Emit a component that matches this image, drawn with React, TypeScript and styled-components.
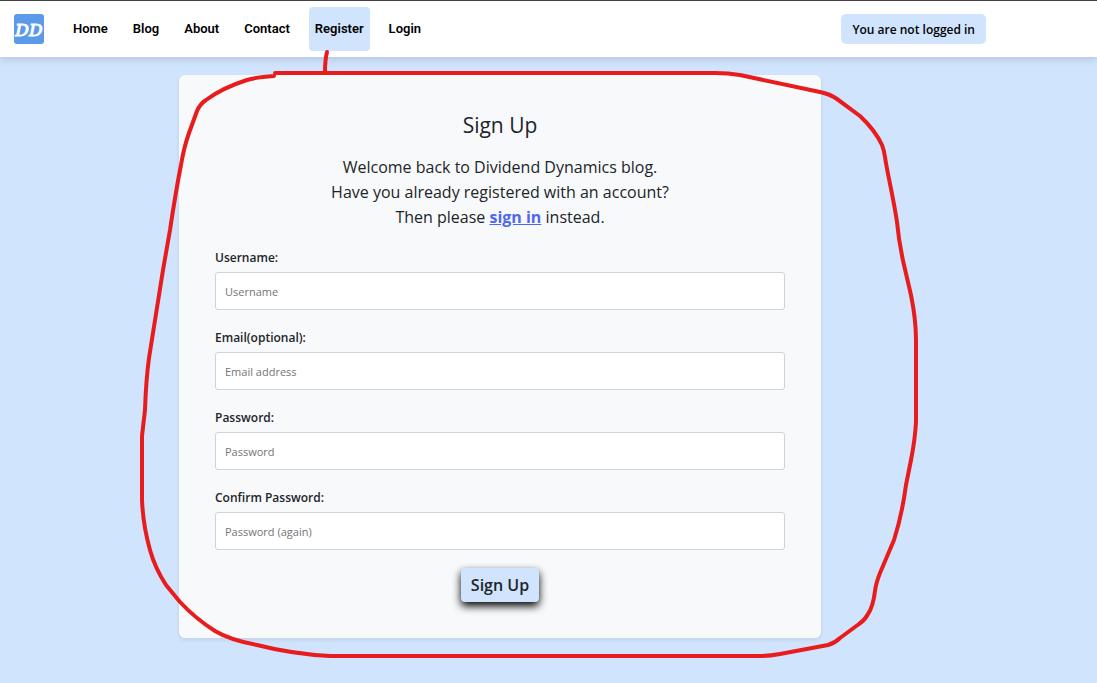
import React from "react";
import styled, { createGlobalStyle } from "styled-components";

const GlobalStyle = createGlobalStyle`
  *, *::before, *::after { box-sizing: border-box; }
  body {
    margin: 0;
    background: #d0e4fd;
    color: #212529;
    font-family: "Open Sans", "Noto Sans", sans-serif;
  }
`;

const Page = styled.div`
  position: relative;
  min-height: 100vh;
  border-top: 1px solid #444444;
`;

const Header = styled.header`
  background: #ffffff;
  box-shadow: 0 2px 8px rgba(0, 0, 0, 0.15);
`;

const HeaderInner = styled.div`
  display: flex;
  align-items: center;
  max-width: 1000px;
  height: 56px;
  padding: 0 14px;
`;

const Logo = styled.a`
  display: block;
  width: 30px;
  height: 30px;
  margin-right: 23px;
`;

const Nav = styled.nav`
  display: flex;
  gap: 13px;
`;

const NavLink = styled.a<{ $active?: boolean }>`
  display: flex;
  align-items: center;
  height: 44px;
  padding: 0 6px;
  border-radius: 4px;
  background: ${(p) => (p.$active ? "#d0e4fd" : "transparent")};
  color: #000000;
  font: 600 13px/20px Roboto, sans-serif;
  text-decoration: none;
`;

const Status = styled.p`
  display: flex;
  align-items: center;
  height: 30px;
  margin: 0 0 0 auto;
  padding: 0 11px;
  border-radius: 5px;
  background: #d0e4fd;
  color: #000000;
  font-size: 12px;
  font-weight: 600;
`;

const Main = styled.main`
  max-width: 1000px;
  padding: 18px 16px 44px;
`;

const Card = styled.section`
  max-width: 642px;
  margin: 0 auto;
  padding: 36px;
  border-radius: 6px;
  background: #f8f9fb;
  box-shadow: 0 2px 4px rgba(0, 0, 0, 0.08);
`;

const Title = styled.h1`
  margin: 0 0 16px;
  font-size: 21px;
  line-height: 28px;
  font-weight: 500;
  text-align: center;
`;

const Intro = styled.p`
  margin: 0 0 20px;
  font-size: 16px;
  line-height: 25px;
  font-weight: 400;
  text-align: center;
`;

const TextLink = styled.a`
  color: #4f68f0;
  font-weight: 700;
`;

const Form = styled.form`
  display: flex;
  flex-direction: column;
  gap: 18px;
`;

const Fields = styled.div`
  display: flex;
  flex-direction: column;
  gap: 20px;
`;

const Field = styled.div`
  display: flex;
  flex-direction: column;
  gap: 6px;
`;

const Label = styled.label`
  font-size: 12px;
  line-height: 16px;
  font-weight: 600;
`;

const Input = styled.input`
  width: 100%;
  height: 38px;
  padding: 0 9px;
  border: 1px solid #ced4da;
  border-radius: 3px;
  background: #ffffff;
  color: #212529;
  font-family: inherit;
  font-size: 11px;

  &::placeholder {
    color: #757575;
    opacity: 1;
  }
`;

const SubmitButton = styled.button`
  align-self: center;
  height: 34px;
  padding: 0 10px;
  border: 0;
  border-radius: 4px;
  background: #d0e4fd;
  box-shadow: 0 4px 8px #000000;
  color: #212529;
  font-family: inherit;
  font-size: 16px;
  font-weight: 600;
`;

const Marker = styled.svg`
  position: absolute;
  top: -1px;
  left: 0;
  pointer-events: none;
`;

const links = ["Home", "Blog", "About", "Contact", "Register", "Login"];

const fields = [
  { id: "username", label: "Username:", placeholder: "Username", type: "text" },
  { id: "email", label: "Email(optional):", placeholder: "Email address", type: "email" },
  { id: "password1", label: "Password:", placeholder: "Password", type: "password" },
  { id: "password2", label: "Confirm Password:", placeholder: "Password (again)", type: "password" },
];

export default function App() {
  return (
    <>
      <GlobalStyle />
      <Page>
        <Header>
          <HeaderInner>
            <Logo href="#" aria-label="Dividend Dynamics">
              <svg width="30" height="30" viewBox="0 0 30 30">
                <rect width="30" height="30" rx="3" fill="#5b9ae8" />
                <text
                  x="15"
                  y="22"
                  textAnchor="middle"
                  fill="#ffffff"
                  stroke="#ffffff"
                  strokeWidth="1"
                  fontFamily="'DejaVu Serif', serif"
                  fontSize="17"
                  fontStyle="italic"
                  fontWeight="400"
                >
                  DD
                </text>
              </svg>
            </Logo>
            <Nav>
              {links.map((name) => (
                <NavLink key={name} href="#" $active={name === "Register"}>
                  {name}
                </NavLink>
              ))}
            </Nav>
            <Status>You are not logged in</Status>
          </HeaderInner>
        </Header>
        <Main>
          <Card>
            <Title>Sign Up</Title>
            <Intro>
              Welcome back to Dividend Dynamics blog.
              <br />
              Have you already registered with an account?
              <br />
              Then please <TextLink href="#">sign in</TextLink> instead.
            </Intro>
            <Form>
              <Fields>
                {fields.map((f) => (
                  <Field key={f.id}>
                    <Label htmlFor={f.id}>{f.label}</Label>
                    <Input id={f.id} type={f.type} placeholder={f.placeholder} />
                  </Field>
                ))}
              </Fields>
              <SubmitButton type="button">Sign Up</SubmitButton>
            </Form>
          </Card>
        </Main>
        <Marker width="930" height="670" viewBox="0 0 930 670" aria-hidden="true">
          <g fill="none" stroke="#e81c1c" strokeWidth="4" strokeLinecap="round" strokeLinejoin="round">
            <path d="M327 52 Q325 60 325 72" />
            <path d="M275 73 H715 Q728 73 740 75 L820 92 Q830 94 837 99 L860 116 Q875 130 882 145 Q884 150 885 157 C887 172 893 195 897 222 Q899 243 904 265 L911 295 Q916 320 916 340 V422 Q915 440 911 460 L906 485 Q902 515 894 540 L880 573 Q876 583 875 591 Q873 607 868 614 Q865 620 859 624 L840 638 Q835 643 828 645 L780 654 Q770 656 760 656 H330 Q292 654 257 645 Q230 640 215 631 Q196 619 180 602 L166 585 Q155 568 150 550 Q143 525 142 500 V436 L145 410 Q146 380 149 358 L163 270 L170 230 Q176 190 181 165 Q184 147 189 133 L197 111 Q200 104 206 100 Q222 88 247 80 Q257 77 274 76" />
          </g>
        </Marker>
      </Page>
    </>
  );
}
